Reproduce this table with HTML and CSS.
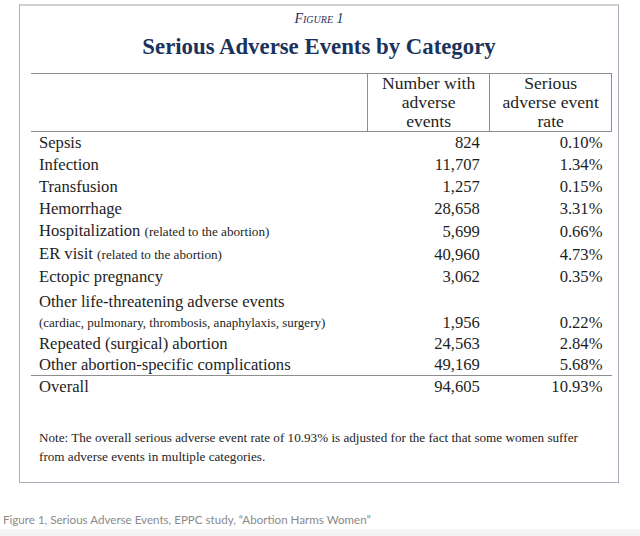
FILE: index.html
```html
<!DOCTYPE html>
<html lang="en">
<head>
<meta charset="utf-8">
<title>Serious Adverse Events by Category</title>
<link rel="stylesheet" href="styles.css">
</head>
<body>
<div class="page">
  <div class="figure">
    <div class="kicker">Figure 1</div>
    <h1 class="title">Serious Adverse Events by Category</h1>
    <table class="data">
      <thead>
        <tr>
          <th class="c-label"></th>
          <th class="c-num">Number with<br>adverse<br>events</th>
          <th class="c-rate">Serious<br>adverse event<br>rate</th>
        </tr>
      </thead>
      <tbody>
        <tr><td class="c-label">Sepsis</td><td class="c-num">824</td><td class="c-rate">0.10%</td></tr>
        <tr><td class="c-label">Infection</td><td class="c-num">11,707</td><td class="c-rate">1.34%</td></tr>
        <tr><td class="c-label">Transfusion</td><td class="c-num">1,257</td><td class="c-rate">0.15%</td></tr>
        <tr><td class="c-label">Hemorrhage</td><td class="c-num">28,658</td><td class="c-rate">3.31%</td></tr>
        <tr><td class="c-label">Hospitalization <span class="aside">(related to the abortion)</span></td><td class="c-num">5,699</td><td class="c-rate">0.66%</td></tr>
        <tr><td class="c-label">ER visit <span class="aside">(related to the abortion)</span></td><td class="c-num">40,960</td><td class="c-rate">4.73%</td></tr>
        <tr><td class="c-label">Ectopic pregnancy</td><td class="c-num">3,062</td><td class="c-rate">0.35%</td></tr>
        <tr class="tall">
          <td class="c-label">Other life-threatening adverse events<span class="sub">(cardiac, pulmonary, thrombosis, anaphylaxis, surgery)</span></td>
          <td class="c-num">1,956</td><td class="c-rate">0.22%</td>
        </tr>
        <tr class="tight"><td class="c-label">Repeated (surgical) abortion</td><td class="c-num">24,563</td><td class="c-rate">2.84%</td></tr>
        <tr class="tight"><td class="c-label">Other abortion-specific complications</td><td class="c-num">49,169</td><td class="c-rate">5.68%</td></tr>
        <tr class="total"><td class="c-label">Overall</td><td class="c-num">94,605</td><td class="c-rate">10.93%</td></tr>
      </tbody>
    </table>
    <p class="note">Note: The overall serious adverse event rate of 10.93% is adjusted for the fact that some women suffer from adverse events in multiple categories.</p>
  </div>
  <p class="caption">Figure 1, Serious Adverse Events, EPPC study, “Abortion Harms Women”</p>
  <div class="band"></div>
</div>
</body>
</html>
```

FILE: styles.css
```css
html, body {
  margin: 0;
  padding: 0;
  background: #ffffff;
}

.page {
  width: 640px;
  height: 536px;
  padding-top: 4px;
  box-sizing: border-box;
  overflow: hidden;
  display: flex;
  flex-direction: column;
}

.figure {
  margin-left: 19px;
  width: 600px;
  height: 479px;
  box-sizing: border-box;
  border: 1px solid #a9b0bd;
  border-top: 2px solid #cfd0d3;
  font-family: "Liberation Serif", "Times New Roman", serif;
  color: #1e1e1e;
}

.kicker {
  margin-top: 5px;
  text-align: center;
  font-style: italic;
  font-variant: small-caps;
  font-size: 14px;
  line-height: 16px;
  color: #1d3561;
}

.title {
  margin: 6px 0 0;
  text-align: center;
  font-size: 22.8px;
  line-height: 28px;
  font-weight: bold;
  color: #1b335c;
}

.data {
  margin: 12px 0 0 11px;
  width: 581px;
  border-collapse: collapse;
  font-size: 16.6px;
}

.data th {
  font-weight: normal;
  font-size: 17.6px;
  line-height: 19px;
  padding: 0;
  text-align: center;
  border-top: 1px solid #8e8e8e;
  border-bottom: 1px solid #8e8e8e;
}

.data th.c-num,
.data th.c-rate {
  border-left: 1px solid #8e8e8e;
  border-right: 1px solid #8e8e8e;
}

.data .c-label {
  width: 333px;
  padding-left: 8px;
  text-align: left;
}

.data .c-num {
  width: 120px;
}

.data .c-rate {
  width: 120px;
}

.data td {
  padding: 0;
  height: 22px;
  line-height: 22px;
  white-space: nowrap;
}

.data td.c-num {
  text-align: right;
  padding-right: 10px;
}

.data td.c-rate {
  text-align: right;
  padding-right: 9px;
}

.aside {
  font-size: 13.2px;
}

.sub {
  display: block;
  font-size: 13px;
  line-height: 20px;
}

.data tr.tall td {
  height: 42px;
  padding-top: 3px;
  vertical-align: bottom;
}

.data tr.tall td.c-num,
.data tr.tall td.c-rate {
  line-height: 20px;
}

.data tr.tight td {
  height: 21px;
  line-height: 21px;
}

.data tr.total td {
  border-top: 1px solid #8e8e8e;
}

.note {
  margin: 30px 0 0 19px;
  width: 565px;
  font-size: 13.15px;
  line-height: 19px;
}

.caption {
  margin: 28px 0 0 3px;
  font-family: Lato, "Liberation Sans", sans-serif;
  font-size: 11.6px;
  line-height: 18px;
  color: #8a8a8a;
}

.band {
  flex: 1;
  background: #f3f3f3;
}
```
